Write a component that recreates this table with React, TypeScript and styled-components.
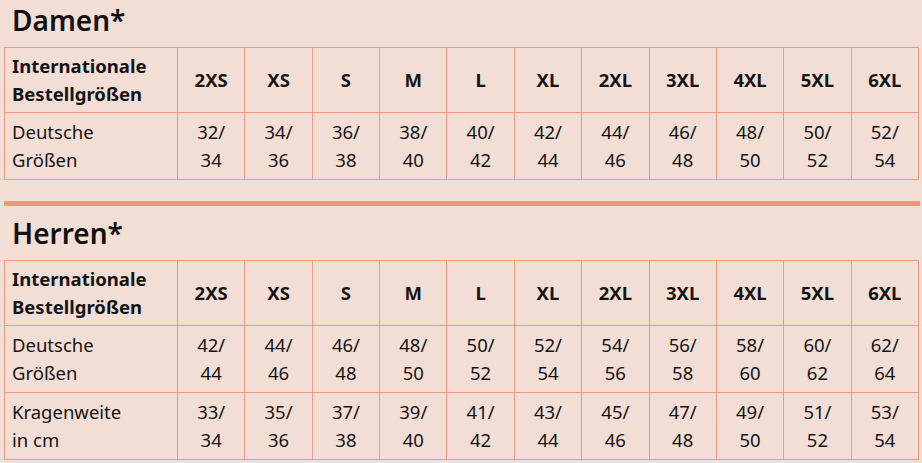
import React from 'react'
import styled, { createGlobalStyle } from 'styled-components'

const SIZES = ['2XS', 'XS', 'S', 'M', 'L', 'XL', '2XL', '3XL', '4XL', '5XL', '6XL']

type SizeRow = { label: [string, string], values: [string, string][] }

const DAMEN: SizeRow[] = [
  {
    label: ['Deutsche', 'Größen'],
    values: [['32/', '34'], ['34/', '36'], ['36/', '38'], ['38/', '40'], ['40/', '42'], ['42/', '44'],
      ['44/', '46'], ['46/', '48'], ['48/', '50'], ['50/', '52'], ['52/', '54']]
  }
]

const HERREN: SizeRow[] = [
  {
    label: ['Deutsche', 'Größen'],
    values: [['42/', '44'], ['44/', '46'], ['46/', '48'], ['48/', '50'], ['50/', '52'], ['52/', '54'],
      ['54/', '56'], ['56/', '58'], ['58/', '60'], ['60/', '62'], ['62/', '64']]
  },
  {
    label: ['Kragenweite', 'in cm'],
    values: [['33/', '34'], ['35/', '36'], ['37/', '38'], ['39/', '40'], ['41/', '42'], ['43/', '44'],
      ['45/', '46'], ['47/', '48'], ['49/', '50'], ['51/', '52'], ['53/', '54']]
  }
]

const GlobalStyle = createGlobalStyle`
  html, body {
    margin: 0;
    padding: 0;
    background: #f3ded6;
  }
  body {
    font-family: "Noto Sans", "Open Sans", sans-serif;
    color: #141414;
  }
`

const SizeTable = ({ rows }: { rows: SizeRow[] }) => (
  <Table>
    <colgroup>
      <col style={{ width: 173 }} />
      {SIZES.map(s => <col key={s} />)}
    </colgroup>
    <tbody>
      <HeadRow>
        <LabelCell bold>Internationale<br />Bestellgrößen</LabelCell>
        {SIZES.map(s => <SizeCell key={s}>{s}</SizeCell>)}
      </HeadRow>
      {rows.map(row => (
        <DataRow key={row.label[0]}>
          <LabelCell>{row.label[0]}<br />{row.label[1]}</LabelCell>
          {row.values.map((v, i) => (
            <ValueCell key={i}>{v[0]}<br />{v[1]}</ValueCell>
          ))}
        </DataRow>
      ))}
    </tbody>
  </Table>
)

export default function App() {
  return (
    <>
      <GlobalStyle />
      <Page>
        <Title first>Damen*</Title>
        <SizeTable rows={DAMEN} />
        <Divider />
        <Title>Herren*</Title>
        <SizeTable rows={HERREN} />
      </Page>
    </>
  )
}

const Page = styled.div`
  padding: 0 4px;
  width: 918px;
  box-sizing: border-box;
`
const Title = styled.h2<{ first?: boolean }>`
  margin: ${({ first }) => first ? '2px 0 9px 8px' : '9px 0 9px 8px'};
  font-size: 28px;
  line-height: 36px;
  font-weight: 600;
  color: #111;
`
const Divider = styled.div`
  height: 5px;
  width: 916px;
  margin-top: 21px;
  background: #f4957b;
`
const Table = styled.table`
  width: 915px;
  table-layout: fixed;
  border-collapse: collapse;
  font-size: 18.5px;
  line-height: 28px;
  td {
    border: 1px solid #ee9a82;
    padding: 0;
  }
`
const HeadRow = styled.tr`
  height: 65px;
`
const DataRow = styled.tr`
  height: 67px;
`
const LabelCell = styled.td<{ bold?: boolean }>`
  padding: 0 7px !important;
  text-align: left;
  font-weight: ${({ bold }) => bold ? 700 : 400};
`
const SizeCell = styled.td`
  text-align: center;
  font-weight: 700;
`
const ValueCell = styled.td`
  text-align: center;
`
